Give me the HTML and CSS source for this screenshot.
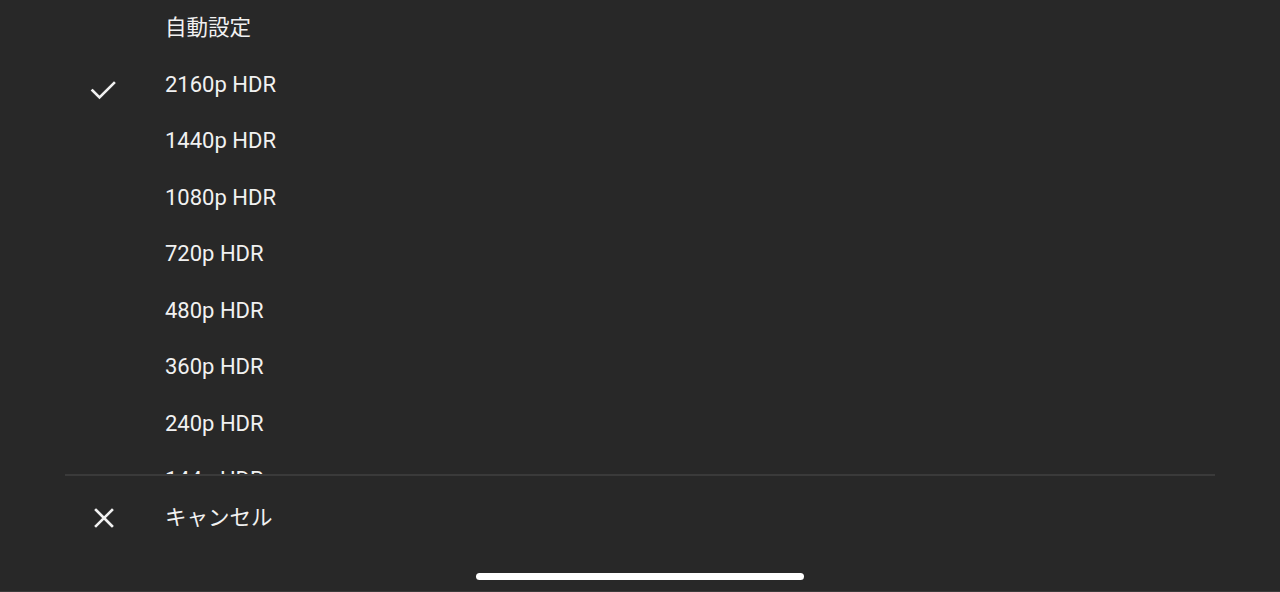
FILE: index.html
```html
<!DOCTYPE html>
<html lang="ja">
<head>
<meta charset="utf-8">
<link rel="stylesheet" href="styles.css">
</head>
<body>
<div class="sheet">
  <div class="list">
    <div class="rows">
      <div class="row"><span class="lead"></span><span class="label jp">自動設定</span></div>
      <div class="row"><span class="lead"><svg class="check" width="28" height="24" viewBox="0 0 28 24"><polyline points="2.5,9.5 9.5,16.5 24,2" fill="none" stroke="#f1f1f1" stroke-width="2.6" stroke-linecap="square" stroke-linejoin="miter"/></svg></span><span class="label">2160p HDR</span></div>
      <div class="row"><span class="lead"></span><span class="label">1440p HDR</span></div>
      <div class="row"><span class="lead"></span><span class="label">1080p HDR</span></div>
      <div class="row"><span class="lead"></span><span class="label">720p HDR</span></div>
      <div class="row"><span class="lead"></span><span class="label">480p HDR</span></div>
      <div class="row"><span class="lead"></span><span class="label">360p HDR</span></div>
      <div class="row"><span class="lead"></span><span class="label">240p HDR</span></div>
      <div class="row"><span class="lead"></span><span class="label">144p HDR</span></div>
    </div>
  </div>
  <div class="divider"></div>
  <div class="cancel">
    <span class="lead"><svg class="close" width="20" height="20" viewBox="0 0 20 20"><path d="M2 2 L18 18 M18 2 L2 18" stroke="#f1f1f1" stroke-width="2.6" stroke-linecap="square"/></svg></span>
    <span class="label jp cancel-label">キャンセル</span>
  </div>
  <div class="home"><div class="indicator"></div></div>
  <div class="edge"></div>
</div>
</body>
</html>
```

FILE: styles.css
```css
html, body {
  margin: 0;
  padding: 0;
  background: #282828;
}
.sheet {
  width: 1280px;
  height: 592px;
  display: flex;
  flex-direction: column;
  background: #282828;
  color: #f1f1f1;
  font-family: Roboto, "Noto Sans CJK JP", sans-serif;
  overflow: hidden;
}
.list {
  height: 474px;
  overflow: hidden;
  flex: none;
}
.row {
  height: 56.5px;
  display: flex;
  align-items: center;
}
.lead {
  width: 165px;
  flex: none;
  display: flex;
  align-items: center;
}
.label {
  font-size: 22px;
  line-height: 28px;
}
.jp {
  font-family: "Noto Sans CJK JP", sans-serif;
  font-size: 21.5px;
  margin-bottom: 4px;
}
.cancel-label {
  margin-bottom: 2px;
}
.check {
  margin-left: 90px;
  margin-top: 16px;
}
.divider {
  height: 2px;
  background: #3a3a3a;
  margin: 0 65px;
  flex: none;
}
.cancel {
  height: 82px;
  display: flex;
  align-items: center;
  flex: none;
}
.close {
  margin-left: 94px;
  margin-top: 2px;
}
.home {
  height: 33px;
  display: flex;
  justify-content: center;
  align-items: flex-start;
  padding-top: 15px;
  box-sizing: border-box;
  flex: none;
}
.indicator {
  width: 328px;
  height: 7px;
  border-radius: 4px;
  background: #ffffff;
}
.edge {
  height: 1px;
  background: #3c3c3c;
  flex: none;
}
```
